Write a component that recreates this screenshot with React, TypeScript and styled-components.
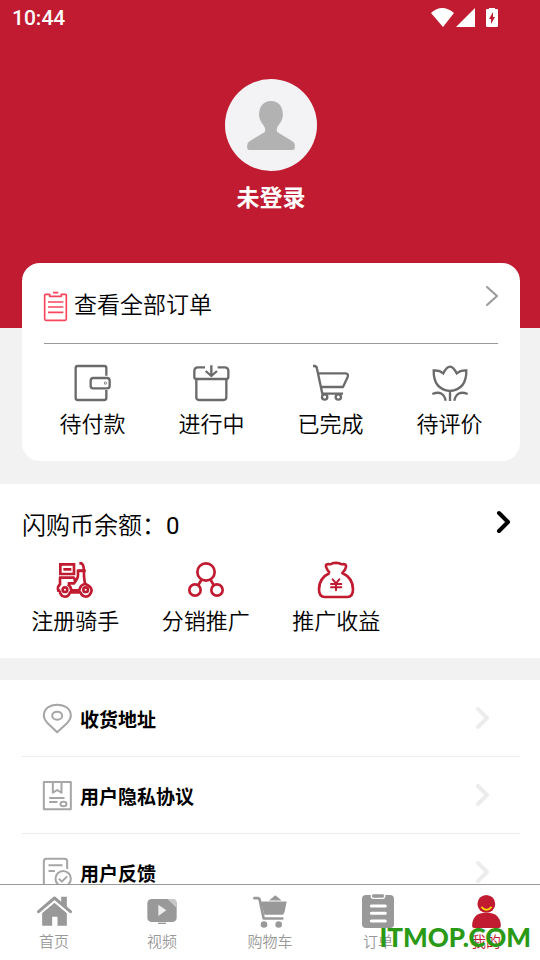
import React from "react";
import styled, { createGlobalStyle } from "styled-components";

const RED = "#c01b30";

const GlobalStyle = createGlobalStyle`
  * { box-sizing: border-box; }
  body {
    margin: 0;
    background: #f2f2f2;
    color: #000;
    font-family: Roboto, "Noto Sans CJK SC", sans-serif;
  }
  button { font: inherit; color: inherit; background: none; border: 0; padding: 0; margin: 0; cursor: pointer; }
  a { color: inherit; text-decoration: none; }
  svg { display: block; flex: none; overflow: visible; }
  ul { list-style: none; margin: 0; padding: 0; }
`;

const Screen = styled.div`
  display: flex;
  flex-direction: column;
  height: 100vh;
`;

const Content = styled.main`
  flex: 1;
  min-height: 0;
  overflow-y: auto;
  scrollbar-width: none;
`;

const Header = styled.header`
  display: flex;
  flex-direction: column;
  background: ${RED};
  color: #fff;
  padding-bottom: 112px;
`;

const StatusBar = styled.div`
  display: flex;
  align-items: center;
  justify-content: space-between;
  height: 35px;
  padding: 0 42px 0 12px;
  font-size: 21px;
  font-weight: 500;
`;

const StatusIcons = styled.div`
  display: flex;
  align-items: center;
  gap: 2px;
  svg:last-child { margin-left: 9px; }
`;

const Profile = styled.button`
  display: flex;
  flex-direction: column;
  align-items: center;
  align-self: center;
  gap: 10px;
  margin: 44px 20px 0 22px;
  font-size: 23px;
  line-height: 35px;
  font-weight: 700;
`;

const Avatar = styled.span`
  display: flex;
  align-items: center;
  justify-content: center;
  width: 92px;
  height: 92px;
  border-radius: 50%;
  background: #f3f3f5;
`;

const OrderCard = styled.section`
  margin: -65px 20px 0 22px;
  height: 198px;
  border-radius: 18px;
  background: #fff;
`;

const OrderHead = styled.a`
  display: flex;
  align-items: flex-start;
  gap: 7px;
  height: 81px;
  margin: 0 22px;
  padding-top: 23px;
  border-bottom: 1px solid #999;
  font-size: 23px;
  line-height: 40px;
  font-weight: 350;
  svg:first-child { margin-top: 6px; }
  svg:last-child { margin-left: auto; }
`;

const IconGrid = styled.nav<{ $left: number; $right: number; $top: number }>`
  display: grid;
  grid-template-columns: repeat(4, 1fr);
  padding: ${(p) => `${p.$top}px ${p.$right}px 0 ${p.$left}px`};
`;

const IconLink = styled.a`
  display: flex;
  flex-direction: column;
  align-items: center;
  gap: 8px;
  font-size: 22px;
  line-height: 32px;
  font-weight: 350;
`;

const Balance = styled.section`
  height: 174px;
  margin: 23px 0 22px;
  padding-top: 23px;
  background: #fff;
`;

const BalanceHead = styled.a`
  display: flex;
  align-items: center;
  justify-content: space-between;
  padding: 0 30px 0 22px;
  font-size: 24px;
  line-height: 38px;
  font-weight: 350;
  svg { margin-bottom: 8px; }
`;

const Amount = styled.span`
  font-weight: 400;
`;

const Menu = styled.ul`
  background: #fff;
  padding: 0 20px 0 22px;
`;

const MenuItem = styled.li`
  border-bottom: 1px solid #ececec;
`;

const MenuLink = styled.a`
  display: flex;
  align-items: center;
  gap: 8px;
  height: 76px;
  padding: 0 31px 0 21px;
  font-size: 19px;
  font-weight: 700;
  svg:last-child { margin-left: auto; }
`;

const TabBar = styled.nav`
  position: relative;
  display: flex;
  height: 76px;
  border-top: 1px solid #999;
  background: #fff;
`;

const Tab = styled.a<{ $active?: boolean }>`
  flex: 1;
  display: flex;
  flex-direction: column;
  align-items: center;
  font-size: 15px;
  line-height: 24px;
  font-weight: 350;
  color: ${(p) => (p.$active ? RED : "#999")};
`;

const TabIcon = styled.span`
  display: flex;
  align-items: center;
  height: 45px;
  padding-top: 7px;
`;

const Watermark = styled.div`
  position: absolute;
  right: 9px;
  bottom: 5px;
  color: #2a9a16;
  font-family: Lato, sans-serif;
  font-weight: 900;
  font-size: 26px;
  line-height: 36px;
  pointer-events: none;
`;

type DrawingProps = {
  w: number;
  h: number;
  box: string;
  stroke?: string;
  sw?: number;
  fill?: string;
  children: React.ReactNode;
};

const Drawing = ({ w, h, box, stroke = "none", sw = 5, fill = "none", children }: DrawingProps) => (
  <svg width={w} height={h} viewBox={box} stroke={stroke} strokeWidth={sw} fill={fill} strokeLinejoin="round" aria-hidden="true">
    {children}
  </svg>
);

const Chevron = ({ w, h, color, sw }: { w: number; h: number; color: string; sw: number }) => (
  <Drawing w={w} h={h} box={`0 0 ${w} ${h}`} stroke={color} sw={sw}>
    <path strokeLinecap="round" d={`M${sw / 2} ${sw / 2}L${w - sw / 2} ${h / 2}L${sw / 2} ${h - sw / 2}`} />
  </Drawing>
);

const orders = [
  {
    label: "待付款",
    art: (
      <>
        <path d="M94 32V9q0-6-6-6H8q-6 0-6 6v90q0 6 6 6h80q6 0 6-6V75" />
        <rect x="47" y="39" width="57" height="31" rx="8" />
        <circle cx="91" cy="54" r="1" />
      </>
    ),
  },
  {
    label: "进行中",
    art: (
      <>
        <path d="M33 7H12Q1 7 1 18V36q0 6 6 6h90q6 0 6-6V18Q103 7 92 7H71" />
        <path d="M52 1V32M35 18l17 15 17-15M7 43V97q0 8 8 8h74q8 0 8-8V43" />
      </>
    ),
  },
  {
    label: "已完成",
    art: (
      <>
        <path d="M0 3h4q7 0 8 8l16 75H90M18 25H98q9 1 6 11L90 66H26" />
        <circle cx="35" cy="96" r="8" />
        <circle cx="76" cy="96" r="8" />
      </>
    ),
  },
  {
    label: "待评价",
    art: (
      <path strokeLinejoin="miter" d="M5 16q18-1 29 9Q44 5 54 5t20 20q11-10 29-9Q104 74 54 78Q4 74 5 16ZM54 78V108M1 87Q34 74 41 107M107 87Q74 74 67 107" />
    ),
  },
];

const services = [
  {
    label: "注册骑手",
    art: (
      <>
        <path strokeLinejoin="miter" d="M10 7H51V36H10ZM19 22H43M6 47H53M9 47V67Q0 75 4 86H10M32 67Q42 72 43 85H67Q70 68 84 66L81 44V27H63V40Q63 50 51 64H32" />
        <path d="M67 4H73Q80 7 81 27M53 47V57M61 26H86" />
        <path d="M9 92Q13 104 24 104T39 91H70Q75 104 87 104T104 86Q104 73 84 65M9 92V86" />
        <circle cx="24" cy="83" r="7" />
        <circle cx="86" cy="83" r="7" />
      </>
    ),
  },
  {
    label: "分销推广",
    art: (
      <>
        <circle cx="54" cy="30" r="26" />
        <circle cx="21" cy="84" r="17" />
        <circle cx="87" cy="84" r="17" />
        <path d="M40 54L31 69M68 54L77 69" />
      </>
    ),
  },
  {
    label: "推广收益",
    art: (
      <>
        <path d="M35 33L28 23Q18 7 31 6q8 2 12-2q11-3 21 0q5 4 13 2q12 1 4 17L73 33Q105 48 105 82Q105 105 88 105H20Q3 105 3 82Q3 48 35 33" />
        <path strokeWidth="6" strokeLinecap="round" d="M44 52l10 12 10-12M54 64V85M39 66H70M39 76H70" />
      </>
    ),
  },
];

const menu = [
  {
    label: "收货地址",
    art: (
      <>
        <path d="M42 85L12 56Q2 44 2 35C2 14 20 2 42 2S83 14 83 35Q83 44 73 56Z" />
        <ellipse cx="42" cy="35" rx="15" ry="12" />
      </>
    ),
  },
  {
    label: "用户隐私协议",
    art: (
      <>
        <path d="M2 3H83V85H2ZM29 4V35L42 27L55 35V4M18 51H64M18 63H43" />
        <ellipse cx="61" cy="69" rx="9" ry="7" />
      </>
    ),
  },
  {
    label: "用户反馈",
    art: (
      <>
        <path d="M36 84H10q-8 0-8-8V10q0-8 8-8H64q8 0 8 8V33M16 22H58M16 39H35" />
        <circle cx="60" cy="62" r="23" />
        <path d="M47 62l9 9 16-16" />
      </>
    ),
  },
];

const tabs = [
  {
    label: "首页",
    icon: (
      <Drawing w={35} h={30} box="0 0 104 90" fill="currentColor">
        <path d="M15 51L52 20L89 51V89H61V62H45V89H15ZM72 2H89V35L72 21Z" />
        <path d="M4 47L52 6L100 47" fill="none" stroke="currentColor" strokeWidth="9" strokeLinecap="round" />
        <path d="M11 53L52 18L93 53" fill="none" stroke="#fff" strokeWidth="3" />
      </Drawing>
    ),
  },
  {
    label: "视频",
    icon: (
      <Drawing w={30} h={25} box="0 0 88 75" fill="currentColor">
        <rect width="88" height="69" rx="13" />
        <path fill="#c8c8c8" d="M60 0H76Q88 1 88 12V27Z" />
        <path fill="#eee" d="M33 17L57 34L33 51Z" />
        <path d="M32 71H56V75H32Z" />
      </Drawing>
    ),
  },
  {
    label: "购物车",
    icon: (
      <Drawing w={34} h={33} box="0 0 102 98" fill="currentColor">
        <path d="M67 0L86 16H48ZM24 19H101L95 49Q93 57 88 59H34Z" />
        <path d="M4 9H14Q19 9 20 14L32 70H88" fill="none" stroke="currentColor" strokeWidth="8" strokeLinecap="round" />
        <circle cx="33" cy="88" r="10" />
        <circle cx="77" cy="88" r="10" />
      </Drawing>
    ),
  },
  {
    label: "订单",
    icon: (
      <Drawing w={32} h={34} box="0 0 96 102" fill="currentColor">
        <rect y="3" width="96" height="99" rx="12" />
        <rect x="28" y="-1" width="40" height="14" rx="6" stroke="#fff" strokeWidth="4" />
        <path d="M28 36H70M28 58H70M28 81H70" stroke="#fff" strokeWidth="9" strokeLinecap="round" />
      </Drawing>
    ),
  },
  {
    label: "我的",
    active: true,
    icon: (
      <Drawing w={29} h={33} box="0 0 87 100" fill="currentColor">
        <circle cx="43" cy="27" r="27" />
        <path d="M0 94Q0 54 43 54T87 94Q87 100 81 100H6Q0 100 0 94Z" />
        <path d="M28 36Q43 54 59 36" fill="none" stroke="#fd0" strokeWidth="5" />
      </Drawing>
    ),
  },
];

export default function App() {
  return (
    <Screen>
      <GlobalStyle />
      <Content>
        <Header>
          <StatusBar>
            <time>10:44</time>
            <StatusIcons>
              <Drawing w={23} h={19} box="0 0 23 19" fill="#fff">
                <path d="M0 5Q11-5 23 5L12 19Z" />
              </Drawing>
              <Drawing w={19} h={19} box="0 0 19 19" fill="#fff">
                <path d="M19 0V19H0Z" />
              </Drawing>
              <Drawing w={12} h={19} box="0 0 12 19" fill="#fff">
                <path d="M3 1V0H9V1H11Q12 1 12 2V18Q12 19 11 19H1Q0 19 0 18V2Q0 1 1 1Z" />
                <path fill={RED} d="M7 4V9H9L5 16V11H3Z" />
              </Drawing>
            </StatusIcons>
          </StatusBar>
          <Profile type="button">
            <Avatar>
              <Drawing w={48} h={49} box="0 0 140 144" fill="#b2b2b2">
                <path d="M70 0C92 0 105 16 105 40C105 64 88 70 87 84Q86 92 93 94L133 118Q140 122 140 130V138Q140 144 134 144H6Q0 144 0 138V130Q0 122 7 118L47 94Q54 92 53 84C52 70 35 64 35 40C35 16 48 0 70 0Z" />
              </Drawing>
            </Avatar>
            未登录
          </Profile>
        </Header>

        <OrderCard>
          <OrderHead href="#orders">
            <Drawing w={23} h={29} box="0 0 69 87" stroke="#f9455c">
              <path d="M17 7H5Q2 7 2 10V81Q2 85 6 85H63Q67 85 67 81V10Q67 7 64 7H52V13H17ZM27 2H43M12 30H58M12 45H58M12 61H58" />
            </Drawing>
            查看全部订单
            <Chevron w={12} h={20} color="#999" sw={2} />
          </OrderHead>
          <IconGrid $left={11} $right={11} $top={21} aria-label="我的订单">
            {orders.map((o) => (
              <IconLink key={o.label} href="#orders">
                <Drawing w={36} h={36} box="0 0 108 108" stroke="#6b6b6b" sw={7}>{o.art}</Drawing>
                {o.label}
              </IconLink>
            ))}
          </IconGrid>
        </OrderCard>

        <Balance>
          <BalanceHead href="#balance">
            <span>闪购币余额：<Amount>0</Amount></span>
            <Chevron w={13} h={22} color="#000" sw={4} />
          </BalanceHead>
          <IconGrid $left={10} $right={8} $top={17} aria-label="服务">
            {services.map((s) => (
              <IconLink key={s.label} href="#services">
                <Drawing w={36} h={36} box="0 0 108 108" stroke={RED} sw={8}>{s.art}</Drawing>
                {s.label}
              </IconLink>
            ))}
          </IconGrid>
        </Balance>

        <Menu>
          {menu.map((m) => (
            <MenuItem key={m.label}>
              <MenuLink href="#menu">
                <Drawing w={29} h={29} box="0 0 86 87" stroke="#a6a6a6" sw={6}>{m.art}</Drawing>
                {m.label}
                <Chevron w={13} h={22} color="#ececec" sw={4} />
              </MenuLink>
            </MenuItem>
          ))}
        </Menu>
      </Content>

      <TabBar>
        {tabs.map((t) => (
          <Tab key={t.label} href="#tab" $active={t.active} aria-current={t.active ? "page" : undefined}>
            <TabIcon>{t.icon}</TabIcon>
            {t.label}
          </Tab>
        ))}
        <Watermark>ITMOP.COM</Watermark>
      </TabBar>
    </Screen>
  );
}
